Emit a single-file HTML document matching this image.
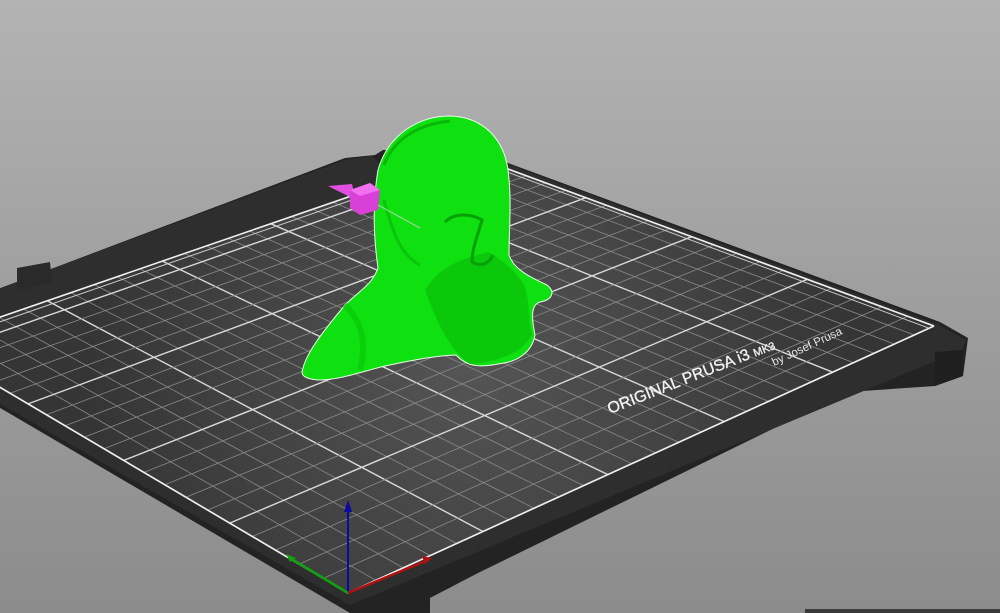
<!DOCTYPE html>
<html><head><meta charset="utf-8"><style>
html,body{margin:0;padding:0;width:1000px;height:613px;overflow:hidden}
body{background:linear-gradient(#b3b3b3,#a0a0a0 45%,#8c8c8c)}
svg{position:absolute;left:0;top:0}
</style></head><body>
<svg id="s" width="1000" height="613" viewBox="0 0 1000 613" xmlns="http://www.w3.org/2000/svg">
<defs>
<radialGradient id="hl" cx="470" cy="360" r="380" gradientUnits="userSpaceOnUse">
<stop offset="0" stop-color="#555"/><stop offset="1" stop-color="#353535"/></radialGradient>
</defs>
<polygon points="-10,402 350,613 430,613 430,598 478,573 848,392 935,386 963,376 968,338 940,322 478,152 383,150 375,155 345,158 -10,292" fill="#232323"/>
<polygon points="-10,292 345,160 372,156 383,166 478,153 937,324 966,340 962,350 350,605 -10,398" fill="#2e2e2e"/>
<polygon points="17,292 17,268 50,262 52,282" fill="#2a2a2a"/>
<polygon points="935,352 962,350 963,376 935,386" fill="#1f1f1f"/>
<polygon id="gridq" points="" fill="url(#hl)"/>
<g id="g"></g>
<text x="0" y="0" transform="translate(610,414) rotate(-21.5)" fill="#f2f2f2" stroke="#f2f2f2" stroke-width="0.3" font-family="Liberation Sans, sans-serif" font-size="16">ORIGINAL PRUSA i3 <tspan font-size="11">MK3</tspan></text>
<text x="0" y="0" transform="translate(774,366) rotate(-25)" fill="#e6e6e6" font-family="Liberation Sans, sans-serif" font-size="11.5">by Josef Prusa</text>
<path d="M302,372 C305,355 320,335 345,305 C360,290 372,285 378,268 C374,240 372,205 378,170 C388,135 418,116 450,116 C484,117 504,140 508,170 C512,200 509,230 509,255 C514,270 532,278 547,285 C556,292 552,300 540,302 C530,305 532,320 535,335 C532,352 518,362 498,364 C482,367 468,368 456,355 C430,356 405,362 385,366 C360,372 340,380 318,380 C308,379 302,377 302,372 Z" fill="#0fe00f" stroke="#e8ffe8" stroke-width="1"/>
<path d="M425,290 C438,325 450,350 470,364 C490,362 518,358 532,335 C528,318 530,300 524,285 C515,270 500,258 488,252 C465,258 440,265 425,290 Z" fill="#0bc80b"/>
<path d="M445,222 C455,212 472,214 482,220 C478,235 472,248 472,262 C482,268 490,262 493,255" fill="none" stroke="#07a007" stroke-width="3"/>
<path d="M384,165 C394,138 420,124 450,121" fill="none" stroke="#08b808" stroke-width="3"/>
<path d="M384,200 C392,230 400,255 420,265" fill="none" stroke="#0bc40b" stroke-width="3"/>
<path d="M345,305 C360,320 368,340 360,370" fill="none" stroke="#0bcf0b" stroke-width="6"/>
<polygon points="328,186 352,184 356,200" fill="#e050e0"/>
<polygon points="350,190 370,183 380,190 378,210 360,215 350,208" fill="#d840d8"/>
<polygon points="350,190 370,183 380,190 360,196" fill="#f070f0"/>
<line x1="378" y1="205" x2="420" y2="228" stroke="#a8d8a8" stroke-width="1"/>
<line x1="348" y1="593" x2="348" y2="510" stroke="#0a0aa0" stroke-width="2"/>
<polygon points="344,512 352,512 348,500" fill="#0a0aa0"/>
<line x1="348" y1="593" x2="290" y2="558" stroke="#10a010" stroke-width="2.5"/>
<polygon points="286,554 296,558 290,562" fill="#10a010"/>
<line x1="348" y1="593" x2="428" y2="560" stroke="#b01010" stroke-width="2.5"/>
<polygon points="432,558 422,556 425,564" fill="#b01010"/>
<rect x="805" y="609" width="195" height="4" fill="#3a3a3a"/>
</svg>
<script>
(function(){
var F=[348,593],R=[934,326],B=[470,155],L=[-75,343];
function H(p0,p1,p2,p3){
 var x0=p0[0],y0=p0[1],x1=p1[0],y1=p1[1],x2=p2[0],y2=p2[1],x3=p3[0],y3=p3[1];
 var dx1=x1-x2,dx2=x3-x2,dy1=y1-y2,dy2=y3-y2,sx=x0-x1+x2-x3,sy=y0-y1+y2-y3;
 var den=dx1*dy2-dx2*dy1;
 var g=(sx*dy2-dx2*sy)/den,h=(dx1*sy-sx*dy1)/den;
 var a=x1-x0+g*x1,b=x3-x0+h*x3,c=x0,d=y1-y0+g*y1,e=y3-y0+h*y3,f=y0;
 return function(u,v){var w=g*u+h*v+1;return [(a*u+b*v+c)/w,(d*u+e*v+f)/w];};
}
var m=H(F,R,B,L);
var q=document.getElementById('gridq');
q.setAttribute('points',[F,R,B,L].map(function(p){return p.join(',')}).join(' '));
var g=document.getElementById('g'),s='';
function ln(a,b,col,w){s+='<line x1="'+a[0].toFixed(1)+'" y1="'+a[1].toFixed(1)+'" x2="'+b[0].toFixed(1)+'" y2="'+b[1].toFixed(1)+'" stroke="'+col+'" stroke-width="'+w+'"/>';}
for(var x=0;x<=250;x+=10){var u=x/250;var maj=(x%50==0);ln(m(u,0),m(u,1),maj?'#d8d8d8':'#8a8a8a',maj?1.4:0.8);}
for(var y=0;y<=210;y+=10){var v=y/210;var maj=(y%50==0);ln(m(0,v),m(1,v),maj?'#d8d8d8':'#8a8a8a',maj?1.4:0.8);}
ln(m(0,0),m(1,0),'#eee',1.6);ln(m(0,1),m(1,1),'#eee',1.6);ln(m(0,0),m(0,1),'#eee',1.6);ln(m(1,0),m(1,1),'#eee',1.6);
ln(m(0,0.985),m(1,0.985),'#ccc',1);ln(m(0.99,0),m(0.99,1),'#ccc',1);
g.innerHTML=s;
})();
</script>
</body></html>
